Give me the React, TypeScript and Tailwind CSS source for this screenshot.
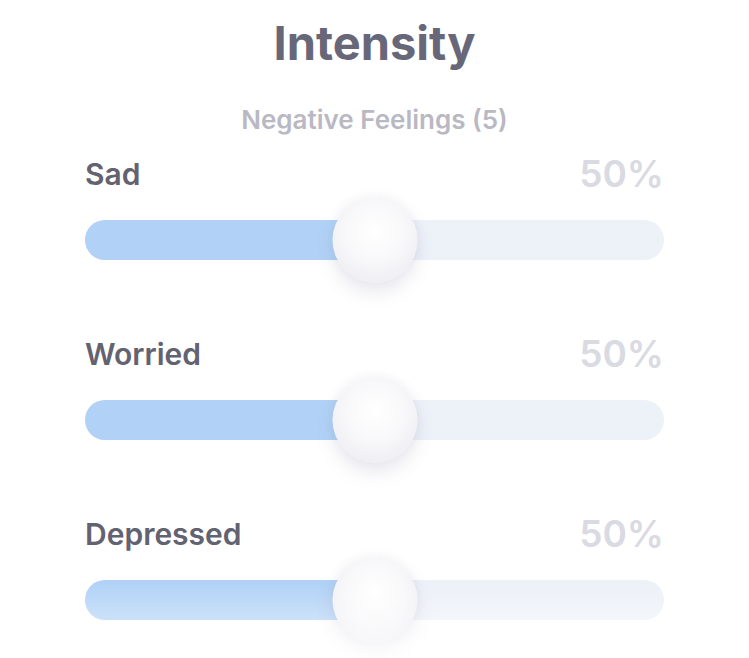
const feelings = [
  { name: "Sad", value: 50 },
  { name: "Worried", value: 50 },
  { name: "Depressed", value: 50 },
];

const Slider = ({ value }: { value: number }) => {
  return (
    <div className="relative h-[40px] w-full rounded-full bg-[#edf1f8]">
      <div
        className="h-full rounded-l-full bg-[#b1d2f6]"
        style={{ width: `${value}%` }}
      />
      <div
        className="absolute top-1/2 h-[85px] w-[85px] -translate-x-1/2 -translate-y-1/2 rounded-full bg-[radial-gradient(circle_at_50%_40%,#ffffff_0%,#f8f8fa_45%,#eeeef3_80%,#e6e6ee_100%)] shadow-[0_10px_18px_rgba(110,110,150,0.15),0_-2px_10px_rgba(140,140,170,0.09)]"
        style={{ left: `${value}%` }}
      />
    </div>
  );
};

const Row = ({ name, value }: { name: string; value: number }) => {
  return (
    <div className="flex flex-col">
      <div className="flex flex-row items-end justify-between">
        <span className="text-[30px] leading-[36px] font-semibold text-[#636271]">
          {name}
        </span>
        <span className="text-[37px] leading-[36px] font-semibold text-[#dadae2]">
          {value}%
        </span>
      </div>
      <div className="mt-[28px]">
        <Slider value={value} />
      </div>
    </div>
  );
};

const App = () => {
  return (
    <div
      className="relative h-[658px] w-[749px] overflow-hidden bg-white"
      style={{ fontFamily: "Inter, 'Noto Sans', sans-serif" }}
    >
      <div className="mx-auto flex w-[579px] flex-col items-stretch pt-[19px]">
        <h1 className="text-center text-[47px] leading-[48px] font-bold text-[#686779]">
          Intensity
        </h1>
        <h2 className="mt-[38px] text-center text-[26px] leading-[30px] font-semibold text-[#b9b8c3]">
          Negative Feelings (5)
        </h2>
        <div className="mt-[21px] flex flex-col gap-[76px]">
          {feelings.map((f) => (
            <Row key={f.name} name={f.name} value={f.value} />
          ))}
        </div>
      </div>
      <div className="pointer-events-none absolute bottom-0 left-0 h-[75px] w-full bg-gradient-to-b from-white/0 to-white/70" />
    </div>
  );
};

export default App;
